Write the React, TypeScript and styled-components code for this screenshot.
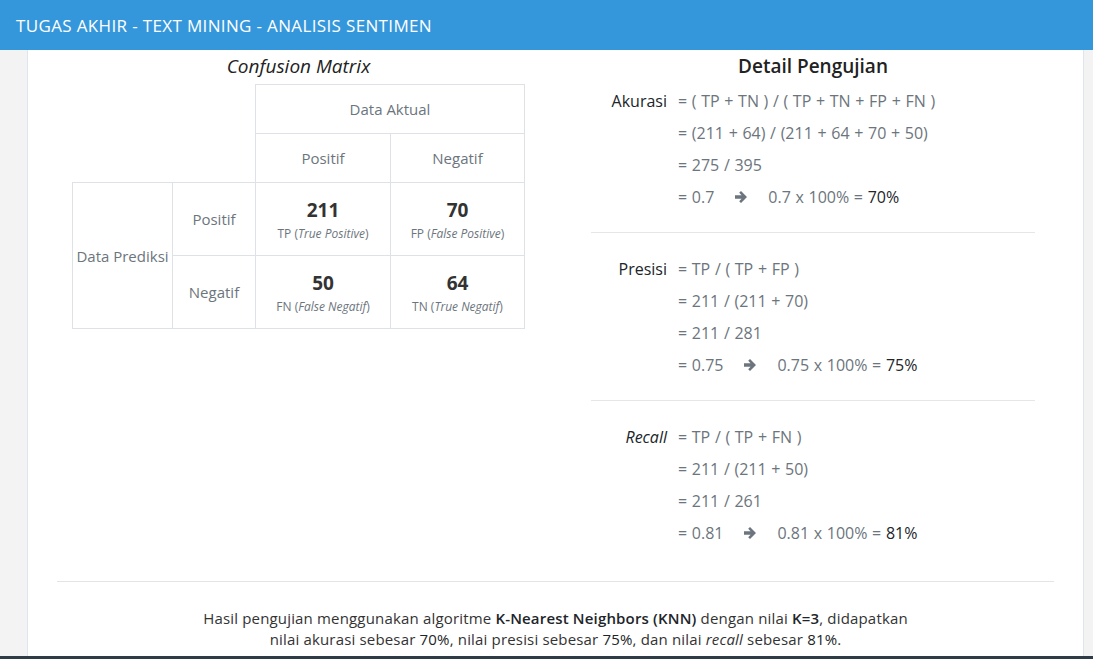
import React from 'react';
import styled, { createGlobalStyle } from 'styled-components';

const GlobalStyle = createGlobalStyle`
    html, body {
        margin: 0;
        padding: 0;
        background: #f3f3f3;
        font-family: "Open Sans", "Noto Sans", sans-serif;
    }
    * { box-sizing: border-box; }
`

interface Line {
    head?: React.ReactNode;
    body: React.ReactNode;
}

const sections: Line[][] = [
    [
        { head: 'Akurasi', body: '= ( TP + TN ) / ( TP + TN + FP + FN )' },
        { body: '= (211 + 64) / (211 + 64 + 70 + 50)' },
        { body: '= 275 / 395' },
        { body: <Result left="= 0.7" right="0.7 x 100% = " value="70%" /> },
    ],
    [
        { head: 'Presisi', body: '= TP / ( TP + FP )' },
        { body: '= 211 / (211 + 70)' },
        { body: '= 211 / 281' },
        { body: <Result left="= 0.75" right="0.75 x 100% = " value="75%" /> },
    ],
    [
        { head: <i>Recall</i>, body: '= TP / ( TP + FN )' },
        { body: '= 211 / (211 + 50)' },
        { body: '= 211 / 261' },
        { body: <Result left="= 0.81" right="0.81 x 100% = " value="81%" /> },
    ],
]

function Arrow() {
    return (
        <ArrowIcon viewBox="0 0 14 14" width="14" height="14">
            <path d="M1 5.2h6.6L5.2 2.8 7 1l6 6-6 6-1.8-1.8 2.4-2.4H1z" fill="currentColor" />
        </ArrowIcon>
    )
}

function Result({ left, right, value }: { left: string; right: string; value: string }) {
    return (
        <>
            {left}
            <Arrow />
            {right}<Dark>{value}</Dark>
        </>
    )
}

export default function App() {
    return (
        <>
            <GlobalStyle />
            <Page>
                <Navbar>TUGAS AKHIR - TEXT MINING - ANALISIS SENTIMEN</Navbar>
                <Panel>
                    <Row>
                        <LeftCol>
                            <Matrix>
                                <caption>Confusion Matrix</caption>
                                <tbody>
                                    <tr style={{ height: 49 }}>
                                        <Blank colSpan={2} rowSpan={2} />
                                        <Cell colSpan={2}>Data Aktual</Cell>
                                    </tr>
                                    <tr style={{ height: 49 }}>
                                        <Cell>Positif</Cell>
                                        <Cell>Negatif</Cell>
                                    </tr>
                                    <tr style={{ height: 73 }}>
                                        <Cell rowSpan={2} $w={100}>Data Prediksi</Cell>
                                        <Cell $w={83}>Positif</Cell>
                                        <Cell $w={135}>
                                            <Num>211</Num>
                                            <Note>TP (<i>True Positive</i>)</Note>
                                        </Cell>
                                        <Cell>
                                            <Num>70</Num>
                                            <Note>FP (<i>False Positive</i>)</Note>
                                        </Cell>
                                    </tr>
                                    <tr style={{ height: 73 }}>
                                        <Cell>Negatif</Cell>
                                        <Cell>
                                            <Num>50</Num>
                                            <Note>FN (<i>False Negatif</i>)</Note>
                                        </Cell>
                                        <Cell>
                                            <Num>64</Num>
                                            <Note>TN (<i>True Negatif</i>)</Note>
                                        </Cell>
                                    </tr>
                                </tbody>
                            </Matrix>
                        </LeftCol>
                        <RightCol>
                            <Title>Detail Pengujian</Title>
                            {sections.map((lines, i) => (
                                <Section key={i} $first={i === 0} $last={i === sections.length - 1}>
                                    {lines.map((line, j) => (
                                        <FormulaRow key={j}>
                                            <Label>{line.head}</Label>
                                            <Formula>{line.body}</Formula>
                                        </FormulaRow>
                                    ))}
                                </Section>
                            ))}
                        </RightCol>
                    </Row>
                    <Divider />
                    <Summary>
                        Hasil pengujian menggunakan algoritme <Bold>K-Nearest Neighbors (KNN)</Bold> dengan nilai <Bold>K=3</Bold>, didapatkan<br />
                        nilai akurasi sebesar <Dark>70%</Dark>, nilai presisi sebesar <Dark>75%</Dark>, dan nilai <i>recall</i> sebesar <Dark>81%</Dark>.
                    </Summary>
                </Panel>
                <BottomEdge />
            </Page>
        </>
    )
}

const Page = styled.div`
    width: 1093px;
    height: 659px;
    overflow: hidden;
    display: flex;
    flex-direction: column;
    background: #f3f3f3;
`

const Navbar = styled.div`
    height: 50px;
    flex-shrink: 0;
    background: #3597db;
    color: #fff;
    font-size: 17px;
    padding-left: 16px;
    display: flex;
    align-items: center;
    letter-spacing: 0.35px;
`

const Panel = styled.div`
    flex: 1;
    min-height: 0;
    overflow: hidden;
    margin-left: 27px;
    width: 1057px;
    background: #fff;
    border-left: 1px solid #dde5ef;
    border-right: 1px solid #dde5ef;
    padding: 0 29px;
    color: #333;
`

const Row = styled.div`
    display: grid;
    grid-template-columns: 533px 1fr;
`

const LeftCol = styled.div`
    padding-left: 15px;
`

const Matrix = styled.table`
    border-collapse: collapse;
    width: 453px;
    font-size: 15px;
    color: #6c757d;

    caption {
        font-style: italic;
        font-size: 19px;
        color: #222;
        padding: 3px 0 5px;
    }
`

const Blank = styled.td`
    border: none;
`

const Cell = styled.td<{ $w?: number }>`
    border: 1px solid #dee2e6;
    text-align: center;
    vertical-align: middle;
    padding: 0;
    width: ${({ $w }) => ($w ? `${$w}px` : 'auto')};
`

const Num = styled.div`
    font-size: 19px;
    font-weight: 700;
    color: #333;
    line-height: 26px;
`

const Note = styled.div`
    font-size: 12px;
    color: #6c757d;
    margin-top: 2px;
`

const RightCol = styled.div`
    width: 444px;
    margin-left: 1px;
`

const Title = styled.div`
    text-align: center;
    font-size: 19px;
    font-weight: 600;
    color: #222;
    padding-top: 3px;
    height: 35px;
`

const Section = styled.div<{ $first?: boolean; $last?: boolean }>`
    padding-top: ${({ $first }) => ($first ? '0' : '20px')};
    padding-bottom: ${({ $last }) => ($last ? '32px' : '19px')};
    border-bottom: ${({ $last }) => ($last ? 'none' : '1px solid #e6e6e6')};
`

const FormulaRow = styled.div`
    display: grid;
    grid-template-columns: 76px 1fr;
    column-gap: 11px;
    height: 32px;
    align-items: center;
    font-size: 16px;
`

const Label = styled.div`
    text-align: right;
    color: #212529;
`

const Formula = styled.div`
    color: #6c757d;
    display: flex;
    align-items: center;
    white-space: pre;
    word-spacing: 0.5px;
`

const ArrowIcon = styled.svg`
    color: #6c757d;
    margin: 0 20px;
`

const Dark = styled.span`
    color: #212529;
`

const Bold = styled.b`
    color: #212529;
    font-weight: 600;
`

const Divider = styled.div`
    border-top: 1px solid #e4e4e4;
`

const Summary = styled.p`
    margin: 0;
    padding-top: 26px;
    text-align: center;
    font-size: 15px;
    letter-spacing: 0.17px;
    line-height: 21px;
    color: #333;
`

const BottomEdge = styled.div`
    height: 3px;
    flex-shrink: 0;
    background: #2f3b46;
`
